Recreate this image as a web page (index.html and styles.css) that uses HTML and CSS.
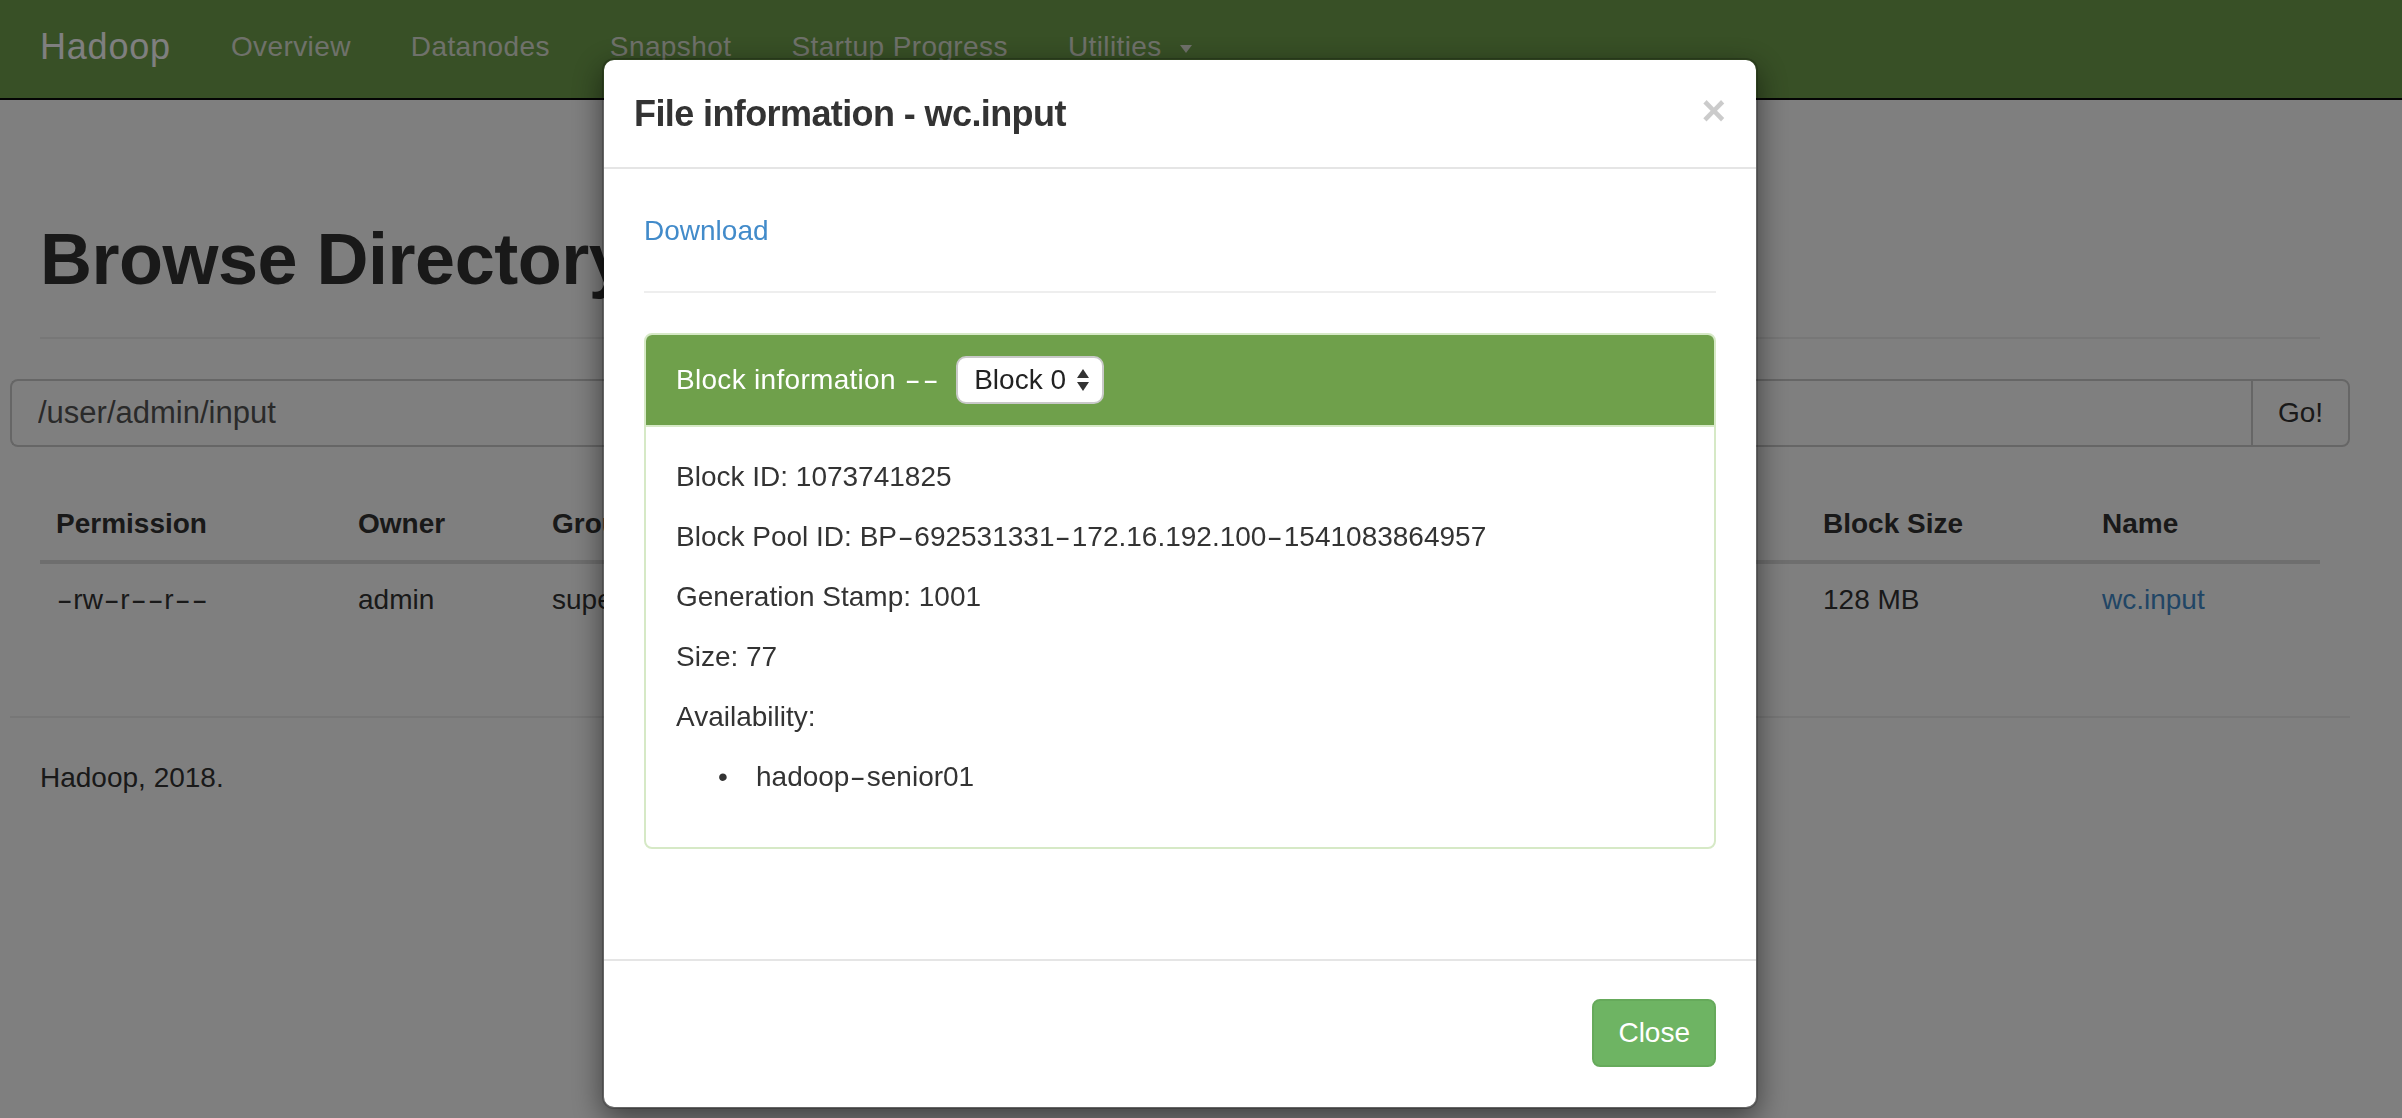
FILE: index.html
```html
<!DOCTYPE html>
<html lang="en">
<head>
<meta charset="utf-8">
<title>Browsing HDFS</title>
<link rel="stylesheet" href="styles.css">
</head>
<body>
<nav class="navbar">
  <div class="navbar-inner">
    <a class="brand" href="#">Hadoop</a>
    <ul class="nav">
      <li>Overview</li>
      <li>Datanodes</li>
      <li>Snapshot</li>
      <li>Startup Progress</li>
      <li>Utilities <span class="caret"></span></li>
    </ul>
  </div>
</nav>

<div class="container">
  <div class="page-header"><h1>Browse Directory</h1></div>

  <div class="row">
    <div class="input-group">
      <input class="form-control" type="text" value="/user/admin/input">
      <button class="btn btn-go" type="button">Go!</button>
    </div>
  </div>

  <table class="table">
    <thead>
      <tr>
        <th class="c-perm">Permission</th>
        <th class="c-owner">Owner</th>
        <th class="c-group">Group</th>
        <th class="c-size"></th>
        <th class="c-mod"></th>
        <th class="c-repl"></th>
        <th class="c-bsize">Block Size</th>
        <th class="c-name">Name</th>
      </tr>
    </thead>
    <tbody>
      <tr>
        <td><span class="dash">-</span>rw<span class="dash">-</span>r<span class="dash">-</span><span class="dash">-</span>r<span class="dash">-</span><span class="dash">-</span></td>
        <td>admin</td>
        <td class="cell-clip">supergroup</td>
        <td></td>
        <td></td>
        <td></td>
        <td>128 MB</td>
        <td><a class="link" href="#">wc.input</a></td>
      </tr>
    </tbody>
  </table>

  <div class="row">
    <hr class="footer-rule">
    <p class="copy">Hadoop, 2018.</p>
  </div>
</div>

<div class="backdrop"></div>

<div class="modal">
  <div class="modal-dialog">
    <div class="modal-content">
      <div class="modal-header">
        <h4 class="modal-title">File information - wc.input</h4>
        <button class="close" type="button">&times;</button>
      </div>
      <div class="modal-body">
        <div class="download"><a class="link-modal" href="#">Download</a></div>
        <hr class="rule">
        <div class="panel">
          <div class="panel-heading">
            <span class="panel-title">Block information <span class="dash">-</span><span class="dash">-</span></span>
            <span class="select">
              <span class="select-text">Block 0</span>
              <svg class="select-arrows" width="14" height="26" viewBox="0 0 14 26">
                <polygon points="1,11 7,2 13,11" fill="#333"/>
                <polygon points="1,15 7,24 13,15" fill="#333"/>
              </svg>
            </span>
          </div>
          <div class="panel-body">
            <p>Block ID: 1073741825</p>
            <p>Block Pool ID: BP<span class="dash">-</span>692531331<span class="dash">-</span>172.16.192.100<span class="dash">-</span>1541083864957</p>
            <p>Generation Stamp: 1001</p>
            <p>Size: 77</p>
            <p>Availability:</p>
            <ul><li>hadoop<span class="dash">-</span>senior01</li></ul>
          </div>
        </div>
      </div>
      <div class="modal-footer">
        <button class="btn btn-success" type="button">Close</button>
      </div>
    </div>
  </div>
</div>
</body>
</html>
```

FILE: styles.css
```css
* { box-sizing: border-box; }

html, body { margin: 0; padding: 0; }

body {
  width: 2402px;
  height: 1118px;
  overflow: hidden;
  font-family: "Liberation Sans", Arial, Helvetica, sans-serif;
  font-size: 28px;
  line-height: 40px;
  color: #333;
  background: #fff;
}

/* the reference font draws "-" as a long dash */
.dash {
  display: inline-block;
  margin: 0 4px;
  transform: scaleX(1.7);
}

/* ---------- navbar ---------- */
.navbar {
  height: 100px;
  background: #70a04c;
  border-bottom: 2px solid #080808;
}
.navbar-inner {
  width: 2340px;
  margin-left: 10px;
  padding: 0 30px;
  height: 98px;
  display: flex;
  align-items: center;
}
.brand {
  font-size: 36px;
  line-height: 40px;
  letter-spacing: 0.8px;
  color: #fff;
  text-decoration: none;
  padding-right: 30px;
  margin-top: -4px;
}
.nav {
  display: flex;
  list-style: none;
  margin: -4px 0 0;
  padding: 0;
}
.nav li {
  padding: 0 30px;
  color: #dfe3d6;
  letter-spacing: 0.4px;
  display: flex;
  align-items: center;
  white-space: pre;
}
.caret {
  display: inline-block;
  width: 0;
  height: 0;
  border-top: 8px solid;
  border-left: 6px solid transparent;
  border-right: 6px solid transparent;
  margin-left: 10px;
  margin-top: 4px;
}

/* ---------- page ---------- */
.container {
  width: 2340px;
  margin-left: 10px;
  padding: 0 30px;
}
.page-header {
  margin: 120px 0 40px;
  padding-bottom: 18px;
  border-bottom: 2px solid #eee;
}
h1 {
  margin: 40px 0 20px;
  font-size: 72px;
  line-height: 79px;
  font-weight: bold;
  letter-spacing: -0.5px;
  color: #333;
}
.row { margin: 0 -30px; }

.input-group {
  display: flex;
  height: 68px;
}
.form-control {
  flex: 1;
  height: 68px;
  border: 2px solid #ccc;
  border-right: 0;
  border-radius: 8px 0 0 8px;
  padding: 0 26px;
  font-family: inherit;
  font-size: 31px;
  color: #555;
  background: #fff;
}
.btn {
  font-family: inherit;
  font-size: 28px;
  line-height: 40px;
  padding: 12px 24px;
  border: 2px solid #ccc;
  background: #fff;
  color: #333;
}
.btn-go {
  border-radius: 0 8px 8px 0;
  width: 99px;
  padding: 0;
}

.table {
  width: 100%;
  table-layout: fixed;
  border-collapse: collapse;
  margin: 40px 0 40px;
}
.table th {
  text-align: left;
  font-weight: bold;
  padding: 16px;
  height: 75px;
  border-bottom: 4px solid #ddd;
  vertical-align: bottom;
}
.table td {
  padding: 16px;
  height: 74px;
  border-top: 2px solid #ddd;
  white-space: nowrap;
}
.table td.cell-clip { overflow: hidden; }
.c-perm { width: 302px; }
.c-owner { width: 194px; }
.c-group { width: 250px; }
.c-size { width: 250px; }
.c-mod { width: 420px; }
.c-repl { width: 351px; }
.c-bsize { width: 279px; }
.c-name { width: 234px; }

.link { color: #428bca; text-decoration: none; }

.footer-rule {
  margin: 80px 0 40px;
  border: 0;
  border-top: 2px solid #eee;
  height: 0;
}
.copy {
  margin: 0 0 20px;
  padding: 0 30px;
}

/* ---------- modal ---------- */
.backdrop {
  position: fixed;
  inset: 0;
  background: rgba(0, 0, 0, 0.5);
}
.modal {
  position: fixed;
  inset: 0;
}
.modal-dialog {
  width: 1156px;
  margin: 58px 0 0 602px;
}
.modal-content {
  background: #fff;
  border: 2px solid rgba(0, 0, 0, 0.2);
  border-radius: 12px;
  box-shadow: 0 10px 30px rgba(0, 0, 0, 0.5);
  background-clip: padding-box;
}
.modal-header {
  display: flex;
  align-items: center;
  justify-content: space-between;
  padding: 28px 30px;
  border-bottom: 2px solid #e5e5e5;
}
.modal-title {
  margin: 0;
  font-size: 36px;
  line-height: 51px;
  font-weight: bold;
  letter-spacing: -0.6px;
  color: #333;
}
.close {
  border: 0;
  background: none;
  padding: 0;
  font-family: inherit;
  font-size: 42px;
  line-height: 42px;
  font-weight: bold;
  color: #000;
  opacity: 0.2;
  margin-top: -6px;
}
.modal-body {
  padding: 42px 40px 40px;
}
.download { line-height: 40px; }
.link-modal { color: #428bca; text-decoration: none; }
.rule {
  margin: 40px 0;
  border: 0;
  border-top: 2px solid #eee;
  height: 0;
}

.panel {
  border: 2px solid #d6e9c6;
  border-radius: 8px;
  margin-bottom: 40px;
  overflow: hidden;
}
.panel-heading {
  background: #6fa04b;
  color: #fff;
  padding: 20px 30px;
  height: 92px;
  display: flex;
  align-items: center;
  border-bottom: 2px solid #d6e9c6;
}
.panel-title { white-space: pre; letter-spacing: 0.3px; }
.select {
  display: inline-flex;
  align-items: center;
  height: 48px;
  margin-left: 17px;
  padding: 0 12px 0 16px;
  gap: 10px;
  background: #fff;
  border: 2px solid #c9c9c9;
  border-radius: 10px;
  color: #222;
}
.select-arrows { display: block; }
.panel-body {
  padding: 30px 30px 30px;
}
.panel-body p { margin: 0 0 20px; }
.panel-body ul {
  margin: 0 0 20px;
  padding-left: 80px;
  list-style: none;
}
.panel-body li::before {
  content: "\2022";
  display: inline-block;
  width: 38px;
  margin-left: -38px;
}

.modal-footer {
  margin-top: 30px;
  padding: 38px 40px 40px;
  border-top: 2px solid #e5e5e5;
  display: flex;
  justify-content: flex-end;
}
.btn-success {
  background: #6eb463;
  border-color: #66aa5b;
  color: #fff;
  border-radius: 8px;
  height: 68px;
}
```
